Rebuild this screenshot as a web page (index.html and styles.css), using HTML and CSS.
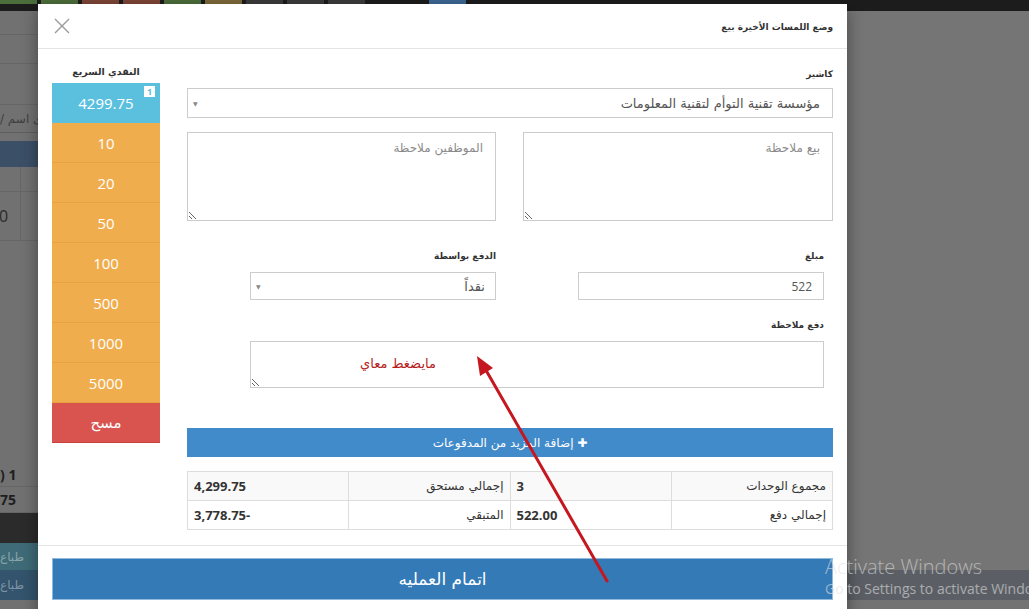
FILE: index.html
```html
<!DOCTYPE html>
<html lang="ar">
  <head>
    <meta charset="UTF-8" />
    <meta name="viewport" content="width=device-width, initial-scale=1.0" />
    <title>نقطة البيع</title>
    <link rel="stylesheet" href="styles.css">
  </head>
  <body>
    <!-- dimmed POS page behind the dialog -->
    <div class="backdrop">
      <div class="topbar">
        <span class="tab tab-green"></span>
        <span class="tab tab-green"></span>
        <span class="tab tab-red"></span>
        <span class="tab tab-red"></span>
        <span class="tab tab-green"></span>
        <span class="tab tab-amber"></span>
        <span class="tab tab-dark"></span>
        <span class="tab tab-dark"></span>
        <span class="tab tab-dark"></span>
        <span class="tab tab-blue"></span>
      </div>
      <div class="page">
        <div class="side-panel">
          <div class="side-row h24"></div>
          <div class="side-row h29"></div>
          <div class="side-row h41"></div>
          <div class="side-search"><span dir="rtl">ى اسم /</span></div>
          <div class="side-head"></div>
          <div class="side-row h25 split"></div>
          <div class="side-row h49 split"><span class="side-num">0</span></div>
          <div class="side-fill"></div>
          <div class="side-row h25 bold"><span>) 1</span></div>
          <div class="side-row h26 bold"><span>75</span></div>
          <div class="side-dark"></div>
          <div class="side-print teal"><span>طباع</span></div>
          <div class="side-print navy"><span>طباع</span></div>
          <div class="side-foot"></div>
        </div>
        <div class="main-panel">
          <div class="main-fill"></div>
          <div class="main-band">
            <svg class="chevron" width="8" height="14" viewBox="0 0 8 14">
              <path d="M7 1 L1 7 L7 13" stroke="#8d9196" stroke-width="2" fill="none" />
            </svg>
          </div>
        </div>
      </div>
    </div>

    <div class="modal" dir="rtl">
      <div class="modal-header">
        <h4 class="modal-title">وضع اللمسات الأخيرة بيع</h4>
        <button class="close" type="button">
          <svg width="16" height="16" viewBox="0 0 16 16">
            <path d="M1 1 L15 15 M15 1 L1 15" stroke="#9a9a9a" stroke-width="1.4" fill="none" />
          </svg>
        </button>
      </div>

      <div class="modal-body">
        <div class="payment-form">
          <label class="field-label">كاشير</label>
          <div class="select-box">
            <span class="select-text">مؤسسة تقنية التوأم لتقنية المعلومات</span>
            <span class="select-arrow">▼</span>
          </div>

          <div class="notes-row">
            <textarea class="note" placeholder="بيع ملاحظة"></textarea>
            <textarea class="note" placeholder="الموظفين ملاحظة"></textarea>
          </div>

          <div class="payment-block">
            <div class="payment-row">
              <div class="payment-field">
                <label class="field-label">مبلغ</label>
                <input class="text-input" type="text" value="522" />
              </div>
              <div class="payment-field">
                <label class="field-label">الدفع بواسطة</label>
                <div class="select-box small">
                  <span class="select-text">نقداً</span>
                  <span class="select-arrow">▼</span>
                </div>
              </div>
            </div>
            <label class="field-label">دفع ملاحظة</label>
            <textarea class="note short"></textarea>
          </div>

          <button class="btn-add" type="button"><span class="plus">✚</span> إضافة المزيد من المدفوعات</button>

          <table class="totals">
            <tr>
              <td>مجموع الوحدات</td>
              <td class="value">3</td>
              <td>إجمالي مستحق</td>
              <td class="value">4,299.75</td>
            </tr>
            <tr>
              <td>إجمالي دفع</td>
              <td class="value">522.00</td>
              <td>المتبقي</td>
              <td class="value">3,778.75-</td>
            </tr>
          </table>
        </div>

        <div class="quick-cash">
          <div class="cash-title">النقدي السريع</div>
          <button class="cash-btn total" type="button">4299.75<span class="cash-badge">1</span></button>
          <button class="cash-btn" type="button">10</button>
          <button class="cash-btn" type="button">20</button>
          <button class="cash-btn" type="button">50</button>
          <button class="cash-btn" type="button">100</button>
          <button class="cash-btn" type="button">500</button>
          <button class="cash-btn" type="button">1000</button>
          <button class="cash-btn" type="button">5000</button>
          <button class="cash-btn clear" type="button">مسح</button>
        </div>
      </div>

      <div class="modal-footer">
        <button class="btn-finish" type="button">اتمام العمليه</button>
      </div>
    </div>

    <!-- red note drawn on top of the form -->
    <div class="scribble">مايضغط معاي</div>
    <svg class="pointer" width="1029" height="609" viewBox="0 0 1029 609">
      <line x1="607" y1="581" x2="487" y2="372" stroke="#c4171f" stroke-width="3" stroke-linecap="round" />
      <polygon points="477,356 493,368 480,376" fill="#c4171f" />
    </svg>

    <div class="watermark">
      <div class="wm-big">Activate Windows</div>
      <div class="wm-small">Go to Settings to activate Windows.</div>
    </div>
  </body>
</html>
```

FILE: styles.css
```css
* {
  box-sizing: border-box;
}

html,
body {
  margin: 0;
  height: 609px;
  overflow: hidden;
}

body {
  position: relative;
  font-family: "Open Sans", "DejaVu Sans", sans-serif;
  background: #737373;
  color: #333;
}

/* ---------- page behind the overlay ---------- */

.backdrop {
  height: 609px;
  display: flex;
  flex-direction: column;
}

.topbar {
  height: 11px;
  flex-shrink: 0;
  background: #1c1c1c;
  display: flex;
  gap: 4px;
}

.tab {
  width: 37px;
  height: 4px;
}

.tab-green { background: #4c6e3b; }
.tab-red { background: #7d4536; }
.tab-amber { background: #7d6a3a; }
.tab-dark { background: #3b3b3b; }
.tab-blue { background: #3d6794; margin-left: 60px; }

.page {
  flex: 1;
  display: grid;
  grid-template-columns: 420px 1fr;
}

.side-panel {
  display: flex;
  flex-direction: column;
  background: #717171;
}

.side-row {
  border-bottom: 1px solid #666;
  font-size: 14px;
  color: #1e1e1e;
  display: flex;
  align-items: center;
}

.h24 { height: 24px; }
.h25 { height: 25px; }
.h26 { height: 26px; }
.h29 { height: 29px; }
.h41 { height: 41px; }
.h49 { height: 49px; }

.side-row.bold {
  font-weight: 700;
}

.side-row.split {
  background: linear-gradient(to right, transparent 20px, #666 20px, #666 21px, transparent 21px);
}

.side-num {
  font-size: 16px;
  color: #2a2a2a;
  margin-left: -1px;
}

.side-search {
  height: 28px;
  border-bottom: 1px solid #5f5f5f;
  margin-bottom: 8px;
  display: flex;
  align-items: center;
  font-family: "DejaVu Sans", sans-serif;
  font-size: 12px;
  color: #3e3e3e;
}

.side-head {
  height: 26px;
  background: #3b4f66;
}

.side-fill {
  flex: 1;
}

.side-dark {
  height: 30px;
  background: #2b2b2b;
}

.side-print {
  display: flex;
  align-items: center;
  font-family: "DejaVu Sans", sans-serif;
  font-size: 12px;
  color: #8aa3ab;
}

.side-print.teal {
  height: 27px;
  background: #3e6b77;
}

.side-print.navy {
  height: 30px;
  background: #33546c;
  color: #7d93a6;
}

.side-foot {
  height: 9px;
}

.main-panel {
  display: flex;
  flex-direction: column;
}

.main-fill {
  height: 559px;
  background: #757575;
}

.main-band {
  height: 30px;
  background: #5b5f65;
  display: flex;
  align-items: center;
  padding-left: 94px;
}

/* ---------- dialog ---------- */

.modal {
  position: absolute;
  left: 38px;
  top: 4px;
  width: 809px;
  height: 640px;
  background: #fff;
  box-shadow: 0 5px 15px rgba(0, 0, 0, 0.4);
  font-family: "DejaVu Sans", sans-serif;
}

.modal-header {
  height: 45px;
  border-bottom: 1px solid #e5e5e5;
  padding: 0 14px 0 16px;
  display: flex;
  align-items: center;
  justify-content: space-between;
}

.modal-title {
  margin: 0;
  font-size: 9px;
  font-weight: 700;
  color: #333;
  padding-top: 1px;
}

.close {
  border: none;
  background: none;
  padding: 0;
  width: 16px;
  height: 16px;
}

.close svg {
  display: block;
}

.modal-body {
  padding: 15px 14px;
  display: grid;
  grid-template-columns: 646px 108px;
  column-gap: 27px;
  align-items: start;
}

.payment-form {
  padding-top: 2px;
  display: flex;
  flex-direction: column;
}

.field-label {
  display: block;
  height: 16px;
  line-height: 16px;
  font-size: 9px;
  font-weight: 700;
  color: #333;
  margin-bottom: 6px;
}

.select-box {
  height: 30px;
  border: 1px solid #ccc;
  display: flex;
  align-items: center;
  justify-content: space-between;
  padding: 0 12px 0 5px;
  margin-bottom: 14px;
}

.select-box.small {
  height: 28px;
  margin-bottom: 0;
  padding-right: 10px;
}

.select-text {
  font-size: 13px;
  color: #555;
}

.select-arrow {
  font-size: 6px;
  color: #888;
}

.notes-row {
  display: grid;
  grid-template-columns: 310px 309px;
  column-gap: 27px;
  margin-bottom: 27px;
}

textarea.note {
  display: block;
  width: 100%;
  height: 89px;
  border: 1px solid #ccc;
  border-radius: 0;
  padding: 8px 12px;
  font-family: "DejaVu Sans", sans-serif;
  font-size: 12px;
  color: #555;
  resize: both;
}

textarea.note::placeholder {
  color: #8a8a8a;
}

.payment-block {
  margin: 0 9px 0 63px;
}

.payment-row {
  display: grid;
  grid-template-columns: 246px 246px;
  justify-content: space-between;
  margin-bottom: 17px;
}

.payment-field .field-label,
.payment-block > .field-label {
  margin-bottom: 8px;
}

.text-input {
  display: block;
  width: 100%;
  height: 28px;
  border: 1px solid #ccc;
  padding: 0 11px;
  font-family: "Open Sans", sans-serif;
  font-size: 12px;
  color: #555;
}

textarea.note.short {
  height: 47px;
}

.btn-add {
  margin-top: 40px;
  height: 29px;
  border: none;
  background: #428bca;
  color: #fff;
  font-family: "DejaVu Sans", sans-serif;
  font-size: 12px;
  padding: 0;
}

.plus {
  font-size: 12px;
}

.totals {
  margin-top: 14px;
  width: 100%;
  border-collapse: collapse;
  table-layout: fixed;
}

.totals td {
  height: 29px;
  border: 1px solid #ddd;
  padding: 0 6px;
  font-size: 12px;
  color: #333;
}

.totals tr:first-child td {
  background: #f9f9f9;
}

.totals td.value {
  font-family: "Open Sans", sans-serif;
  font-size: 13px;
  font-weight: 700;
  direction: ltr;
  text-align: left;
}

/* quick cash buttons */

.quick-cash {
  display: flex;
  flex-direction: column;
}

.cash-title {
  height: 16px;
  line-height: 16px;
  text-align: center;
  font-size: 9.5px;
  font-weight: 700;
  color: #333;
  margin-bottom: 3px;
}

.cash-btn {
  position: relative;
  height: 40px;
  border: none;
  border-bottom: 1px solid #e9a23d;
  background: #f0ad4e;
  color: #fff;
  font-family: "Open Sans", sans-serif;
  font-size: 15px;
  padding: 0;
}

.cash-btn.total {
  background: #5bc0de;
  border-bottom-color: #5bc0de;
}

.cash-btn.clear {
  background: #d9534f;
  border-bottom: 1px solid #c9403c;
  font-family: "DejaVu Sans", sans-serif;
  font-size: 15px;
}

.cash-badge {
  position: absolute;
  top: 3px;
  right: 5px;
  width: 11px;
  height: 11px;
  background: #fff;
  color: #5bc0de;
  font-size: 9px;
  font-weight: 700;
  line-height: 11px;
  text-align: center;
}

/* footer */

.modal-footer {
  border-top: 1px solid #e5e5e5;
  padding: 12px 14px;
}

.btn-finish {
  display: block;
  width: 100%;
  height: 42px;
  border: 1px solid #8fb9df;
  background: #337ab7;
  color: #fff;
  font-family: "DejaVu Sans", sans-serif;
  font-size: 17px;
}

/* ---------- annotations on top ---------- */

.scribble {
  position: absolute;
  left: 360px;
  top: 356px;
  font-family: "DejaVu Sans", serif;
  font-size: 13px;
  color: #b51e1e;
}

.pointer {
  position: absolute;
  left: 0;
  top: 0;
  pointer-events: none;
}

.watermark {
  position: absolute;
  left: 825px;
  top: 555px;
  white-space: nowrap;
  color: rgba(225, 225, 225, 0.6);
  font-family: "Open Sans", sans-serif;
  pointer-events: none;
}

.wm-big {
  font-size: 20px;
  line-height: 24px;
  font-weight: 300;
}

.wm-small {
  font-size: 14px;
  line-height: 20px;
}
```
